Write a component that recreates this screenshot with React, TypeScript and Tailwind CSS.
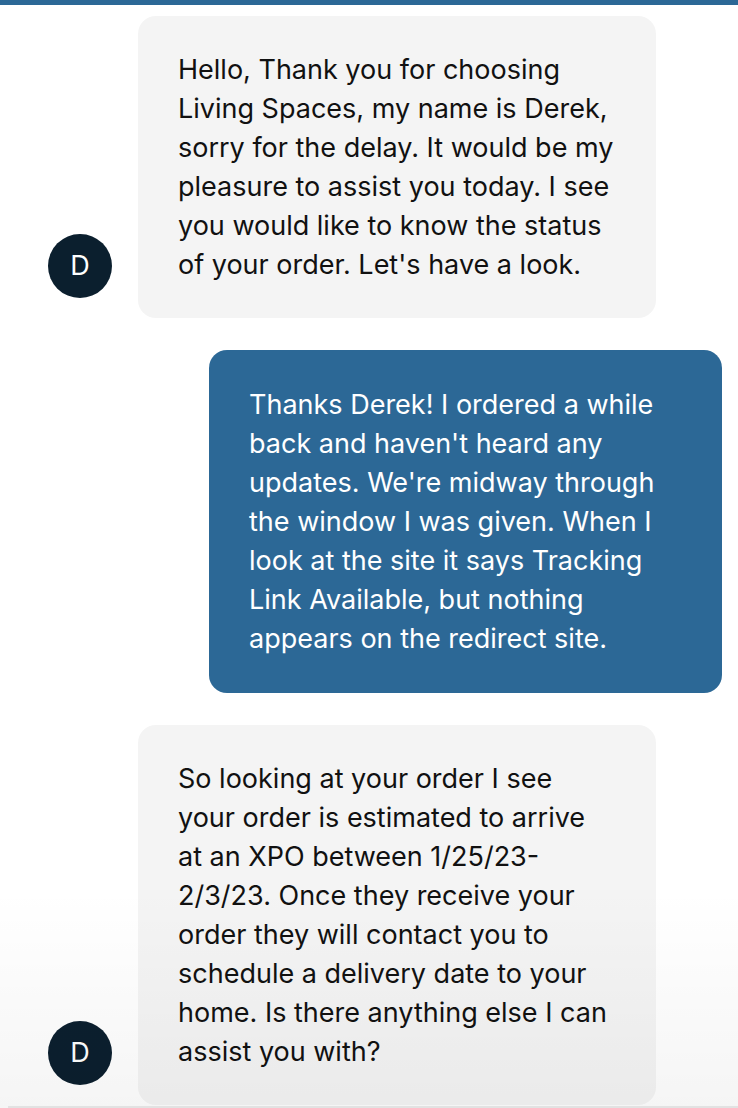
import React from "react";

function Avatar() {
  return (
    <div className="w-16 h-16 rounded-full bg-[#0b1f2e] text-white flex items-center justify-center text-[27px] shrink-0 mb-5">
      D
    </div>
  );
}

function AgentMsg({ children }: { children: React.ReactNode }) {
  return (
    <div className="flex items-end pl-12">
      <Avatar />
      <div className="ml-[26px] w-[518px] bg-[#f4f4f4] rounded-[18px] px-10 py-[34px] text-[#111] text-[27px] leading-[39px]">
        {children}
      </div>
    </div>
  );
}

function UserMsg({ children }: { children: React.ReactNode }) {
  return (
    <div className="flex justify-end pr-4">
      <div className="w-[513px] bg-[#2c6896] rounded-[18px] px-10 py-[35px] text-white text-[27px] leading-[39px]">
        {children}
      </div>
    </div>
  );
}

export default function App() {
  return (
    <div
      className="relative w-[738px] h-[1108px] bg-white overflow-hidden"
      style={{ fontFamily: "Inter, 'Noto Sans', sans-serif" }}
    >
      <div className="h-[5px] bg-[#2c6896]" />
      <div className="flex flex-col gap-8 pt-[11px]">
        <AgentMsg>
          Hello, Thank you for choosing Living Spaces, my name is Derek, sorry for the delay. It would be my pleasure to assist you today. I see you would like to know the status of your order. Let's have a look.
        </AgentMsg>
        <UserMsg>
          Thanks Derek! I ordered a while back and haven't heard any updates. We're midway through the window I was given. When I look at the site it says Tracking Link Available, but nothing appears on the redirect site.
        </UserMsg>
        <AgentMsg>
          So looking at your order I see your order is estimated to arrive at an XPO between 1/25/23-2/3/23. Once they receive your order they will contact you to schedule a delivery date to your home. Is there anything else I can assist you with?
        </AgentMsg>
      </div>
      <div className="pointer-events-none absolute left-0 right-0 bottom-0 h-[220px] bg-gradient-to-b from-transparent to-[rgba(0,0,0,0.04)]" />
      <div className="absolute left-[8px] right-0 bottom-0 h-[2px] bg-[#e2e2e2]" />
    </div>
  );
}
